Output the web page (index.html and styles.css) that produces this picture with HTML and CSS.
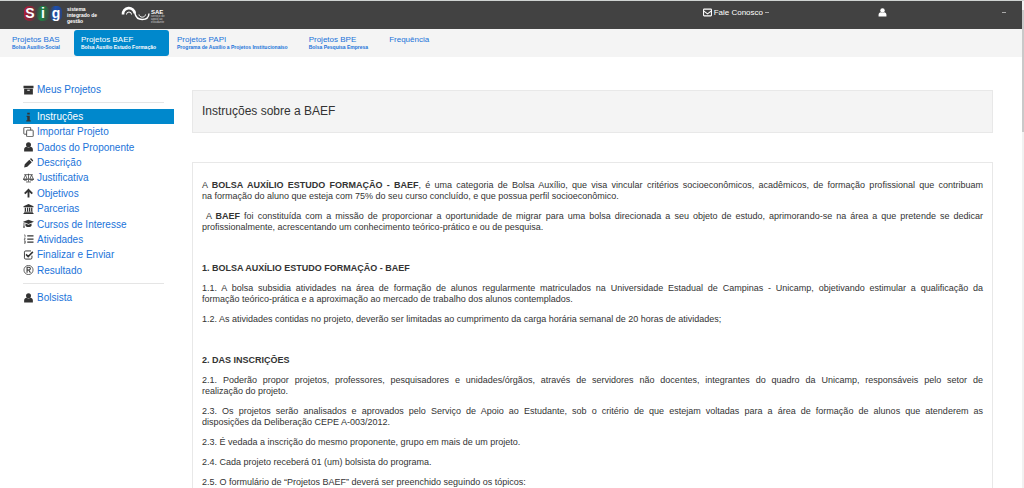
FILE: index.html
```html
<!DOCTYPE html>
<html lang="pt-BR">
<head>
<meta charset="utf-8">
<title>SIG - Projetos BAEF</title>
<link rel="stylesheet" href="styles.css">
</head>
<body>
<div class="window">
<div class="page">
  <header class="topbar">
    <a class="brand" href="#" aria-label="Sistema integrado de gestão">
      <span class="sig"><span class="sig-s">S</span><span class="sig-i">i</span><span class="sig-g">g</span></span>
      <span class="brand-text">sistema<br>integrado de<br>gestão</span>
    </a>
    <a class="sae" href="#" aria-label="SAE">
      <svg class="sae-mark" viewBox="0 0 29 15" fill="none" stroke="#fff"><path d="M2 8.500a5.800 5.800 0 0 1 11.800-1" stroke-width="2.600"/><path d="M5.500 8.500a2.500 2.500 0 0 1 5 0" stroke-width="1"/><path d="M13.800 7c1 4.500 3.500 6.500 7.400 6.500s6.600-2 6.800-6" stroke-width="1.400"/><path d="M18 8.500c.5 3.500 6 3.500 6.500 0" stroke-width="1"/></svg>
      <span class="sae-text"><strong>SAE</strong><small>serviço de<br>apoio ao<br>estudante</small></span>
    </a>
    <nav class="tools">
      <a class="contact" href="#"><svg viewBox="0 0 16 16" fill="none" stroke="currentColor" stroke-width="1.900"><rect x="1" y="2" width="14" height="12" rx="1"/><path d="M1 5l7 5.500L15 5"/></svg><span>Fale Conosco</span><i class="caret"></i></a>
      <a class="user" href="#" aria-label="Usuário"><svg viewBox="0 0 16 16" fill="currentColor"><circle cx="8" cy="4.500" r="4"/><path d="M1 15v-3c0-3 2-4.500 4-4.500 2 1.500 4 1.500 6 0 2 0 4 1.500 4 4.500v3z"/></svg></a>
      <i class="caret"></i>
    </nav>
  </header>
  <nav class="tabs">
    <a class="tab" href="#">Projetos BAS<small>Bolsa Auxílio-Social</small></a>
    <a class="tab active" href="#">Projetos BAEF<small>Bolsa Auxílio Estudo Formação</small></a>
    <a class="tab" href="#">Projetos PAPI<small>Programa de Auxílio a Projetos Institucionaiso</small></a>
    <a class="tab" href="#">Projetos BPE<small>Bolsa Pesquisa Empresa</small></a>
    <a class="tab" href="#">Frequência</a>
  </nav>
  <div class="layout">
    <nav class="sidebar">
      <a class="item" href="#"><svg viewBox="0 0 16 16" fill="currentColor"><path d="M0 1h16v4H0zM1 6h14v9H1zM6 7.500v1.500h4V7.500z" fill-rule="evenodd"/></svg>Meus Projetos</a>
      <hr>
      <div class="group">
        <a class="item active" href="#"><svg viewBox="0 0 16 16" fill="currentColor"><path d="M6 1h4v3H6zM5 6h5v7h1.500v2h-7v-2H6V8H5z"/></svg>Instruções</a>
        <a class="item" href="#"><svg viewBox="0 0 16 16" fill="none" stroke="currentColor" stroke-width="1.300"><rect x="5" y="5" width="10.500" height="10.500" rx="1"/><path d="M5 11.500H1.500a1 1 0 0 1-1-1v-9a1 1 0 0 1 1-1h9a1 1 0 0 1 1 1V5"/></svg>Importar Projeto</a>
        <a class="item" href="#"><svg viewBox="0 0 16 16" fill="currentColor"><circle cx="8" cy="4.500" r="4"/><path d="M1 15v-3c0-3 2-4.500 4-4.500 2 1.500 4 1.500 6 0 2 0 4 1.500 4 4.500v3z"/></svg>Dados do Proponente</a>
        <a class="item" href="#"><svg viewBox="0 0 16 16" fill="currentColor"><path d="M1 15l1-5 7.300-7.300 4 4L6 14zM10.300 1.700l.7-.7c.8-.7 1.500-.5 2 0l2 2c.5.500.6 1.300 0 2l-.7.700z"/></svg>Descrição</a>
        <a class="item" href="#"><svg viewBox="0 0 18 16" fill="none" stroke="currentColor" stroke-width="1.200"><path d="M9 1v13M2 2.500h14M5 14.500h8M4 3L1 10h6zM14 3l-3 7h6z"/><path d="M.5 10h7c-.5 2.500-6.500 2.500-7 0zM10.500 10h7c-.5 2.500-6.500 2.500-7 0z"/></svg>Justificativa</a>
        <a class="item" href="#"><svg viewBox="0 0 16 16" fill="none" stroke="currentColor" stroke-width="3"><path d="M8 15V3M2 9l6-6 6 6"/></svg>Objetivos</a>
        <a class="item" href="#"><svg viewBox="0 0 16 16" fill="currentColor"><path d="M8 0l8 3.500V5H0V3.500zM2 6h2v6H2zM5.500 6h2v6h-2zM8.800 6h2v6h-2zM12.200 6h2v6h-2zM1 12.500h14V14H1zM0 14.500h16V16H0z"/></svg>Parcerias</a>
        <a class="item" href="#"><svg viewBox="0 0 18 16" fill="currentColor"><path d="M9 1l9 3.500L9 8 0 4.500zM4 7.200l5 2 5-2V11c-1 2.800-9 2.800-10 0zM1 5.500h1.200V10l.8 4H.3L1 10z"/></svg>Cursos de Interesse</a>
        <a class="item" href="#"><svg viewBox="0 0 16 16" fill="none" stroke="currentColor" stroke-width="2"><path d="M6 3h10M6 8h10M6 13h10"/><path d="M1 1.500h1.500V5M.8 6.500h2L1 9.500h2M.8 11.200h2v3.600h-2M1.200 13h1.500" stroke-width="1"/></svg>Atividades</a>
        <a class="item" href="#"><svg viewBox="0 0 16 16" fill="none" stroke="currentColor" stroke-width="1.500"><path d="M13.500 9v3.500a2 2 0 0 1-2 2h-8a2 2 0 0 1-2-2v-9a2 2 0 0 1 2-2h8.500"/><path d="M4 7l3.500 3.500L15 3" stroke-width="2.500"/></svg>Finalizar e Enviar</a>
        <a class="item" href="#"><svg viewBox="0 0 16 16" fill="none" stroke="currentColor" stroke-width="1.200"><circle cx="8" cy="8" r="7.300"/><path d="M5.700 12.500v-9h3c3 0 3 4.500 0 4.500h-3M8.500 8l2.500 4.500" stroke-width="1.700"/></svg>Resultado</a>
      </div>
      <hr>
      <a class="item" href="#"><svg viewBox="0 0 16 16" fill="currentColor"><circle cx="8" cy="4.500" r="4"/><path d="M1 15v-3c0-3 2-4.500 4-4.500 2 1.500 4 1.500 6 0 2 0 4 1.500 4 4.500v3z"/></svg>Bolsista</a>
    </nav>
    <main class="content">
      <h1 class="title">Instruções sobre a BAEF</h1>
      <article class="panel">
        <p><span class="line">A <strong>BOLSA AUXÍLIO ESTUDO FORMAÇÃO - BAEF</strong>, é uma categoria de Bolsa Auxílio, que visa vincular critérios socioeconômicos, acadêmicos, de formação profissional que contribuam</span> na formação do aluno que esteja com 75% do seu curso concluído, e que possua perfil socioeconômico.</p>
        <p><span class="line">&nbsp;A <strong>BAEF</strong> foi constituída com a missão de proporcionar a oportunidade de migrar para uma bolsa direcionada a seu objeto de estudo, aprimorando-se na área a que pretende se dedicar</span> profissionalmente, acrescentando um conhecimento teórico-prático e ou de pesquisa.</p>
        <h2>1. BOLSA AUXÍLIO ESTUDO FORMAÇÃO - BAEF</h2>
        <p><span class="line">1.1. A bolsa subsidia atividades na área de formação de alunos regularmente matriculados na Universidade Estadual de Campinas - Unicamp, objetivando estimular a qualificação da</span> formação teórico-prática e a aproximação ao mercado de trabalho dos alunos contemplados.</p>
        <p>1.2. As atividades contidas no projeto, deverão ser limitadas ao cumprimento da carga horária semanal de 20 horas de atividades;</p>
        <h2>2. DAS INSCRIÇÕES</h2>
        <p><span class="line">2.1. Poderão propor projetos, professores, pesquisadores e unidades/órgãos, através de servidores não docentes, integrantes do quadro da Unicamp, responsáveis pelo setor de</span> realização do projeto.</p>
        <p><span class="line">2.3. Os projetos serão analisados e aprovados pelo Serviço de Apoio ao Estudante, sob o critério de que estejam voltadas para a área de formação de alunos que atenderem as</span> disposições da Deliberação CEPE A-003/2012.</p>
        <p>2.3. É vedada a inscrição do mesmo proponente, grupo em mais de um projeto.</p>
        <p>2.4. Cada projeto receberá 01 (um) bolsista do programa.</p>
        <p>2.5. O formulário de “Projetos BAEF” deverá ser preenchido seguindo os tópicos:</p>
      </article>
    </main>
  </div>
</div>
<div class="scrollbar"><div class="thumb"></div></div>
</div>
</body>
</html>
```
FILE: styles.css
```css
* { box-sizing: border-box; }
body { margin: 0; font-family: "Liberation Sans", Arial, sans-serif; color: #333; background: #fff; }
a { color: #1a73d9; text-decoration: none; }
.window { display: flex; height: 100vh; overflow: hidden; border-top: 1px solid #cfd3d1; }
.page { flex: 1; min-width: 0; }
.scrollbar { width: 2px; background: #f1f1f1; padding-top: 9px; }
.thumb { height: 25vh; background: #c9c9c9; }

.topbar { display: flex; align-items: flex-start; height: 28px; padding: 0 16px 0 24px; background: #424242; color: #fff; }
.topbar a { color: #fff; }
.brand { display: flex; align-items: flex-start; gap: 5px; width: 97px; padding-top: 5px; }
.sig { display: flex; gap: 1px; font-size: 14px; line-height: 15px; font-weight: bold; }
.sig span { width: 12px; text-align: center; border-radius: 5px; }
.sig-s { background: linear-gradient(100deg, #b51c3a, #7d2a38 60%, #424242); }
.sig-i { background: linear-gradient(100deg, #424242, #1c8443 40%, #424242); }
.sig-g { background: linear-gradient(100deg, #424242, #1b4fb0 40%, #2a4277); }
.brand-text { font-size: 5px; line-height: 6px; font-weight: bold; }
.sae { display: flex; gap: 1px; padding-top: 5px; }
.sae-mark { width: 29px; height: 15px; }
.sae-text { display: flex; flex-direction: column; padding-top: 3px; }
.sae-text strong { font-size: 6px; line-height: 6px; }
.sae-text small { font-size: 3px; line-height: 3px; color: #ccc; }
.tools { display: flex; align-items: center; gap: 109px; margin-left: auto; height: 23px; font-size: 8px; }
.tools svg { width: 9px; height: 9px; }
.contact { display: flex; align-items: center; gap: 2px; }
.user { display: flex; margin-right: 6px; }
.caret { width: 4px; height: 1px; background: #aaa; }

.tabs { display: flex; gap: 1px; height: 28px; padding: 1px 5px; background: #f4f4f4; }
.tab { height: 26px; padding: 5px 13px 5px 7px; border-radius: 3px; font-size: 8px; line-height: 9px; white-space: nowrap; }
.tab small { display: block; font-size: 5px; line-height: 7px; font-weight: bold; }
.tab.active { background: #0088cc; color: #fff; }

.layout { display: flex; gap: 18px; padding: 25px 29px 0 13px; }
.sidebar { width: 161px; }
.sidebar hr { height: 1px; margin: 5px 10px 6px; border: 0; background: #e5e5e5; }
.group { display: grid; grid-auto-rows: 1fr; height: 169px; }
.item { display: flex; align-items: center; gap: 3px; height: 15px; padding-left: 10px; font-size: 10px; line-height: 15px; }
.item svg { width: 11px; height: 10px; color: #333; }
.item.active { background: #0088cc; color: #fff; }

.content { flex: 1; min-width: 0; padding-top: 8px; }
.title { margin: 0 0 29px; padding: 13px 9px; border: 1px solid #e8e8e8; background: #f4f4f4; font-size: 12px; line-height: 15px; font-weight: normal; }
.panel { padding: 17px 9px 0; border: 1px solid #e8e8e8; border-bottom: 0; font-size: 9px; line-height: 11px; text-align: justify; }
.panel p { margin: 0 0 9px; }
.panel .line { display: block; text-align-last: justify; }
.panel h2 { margin: 30px 0 9px; font-size: 9px; line-height: 11px; }
```
